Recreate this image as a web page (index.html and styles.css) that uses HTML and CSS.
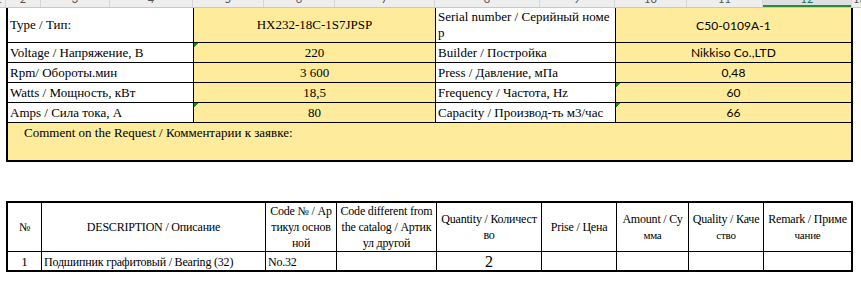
FILE: index.html
```html
<!DOCTYPE html>
<html lang="ru">
<head>
<meta charset="utf-8">
<title>Sheet</title>
<link rel="stylesheet" href="styles.css">
</head>
<body>
<div class="sheet">
  <div class="colhead">
    <div class="ch ch-first">1</div>
    <div class="ch">2</div>
    <div class="ch">3</div>
    <div class="ch">4</div>
    <div class="ch">5</div>
    <div class="ch">6</div>
    <div class="ch">7</div>
    <div class="ch">8</div>
    <div class="ch">9</div>
    <div class="ch">10</div>
    <div class="ch">11</div>
    <div class="ch ch-sel">12</div>
    <div class="ch ch-last">13</div>
  </div>

  <div class="spec">
    <div class="c lbl lbl-type">Type / Тип:</div>
    <div class="c val serif">HX232-18C-1S7JPSP</div>
    <div class="c lbl lbl-wrap">Serial number / Серийный номе<br>р</div>
    <div class="c val sans">C50-0109A-1</div>

    <div class="c lbl">Voltage / Напряжение, В</div>
    <div class="c val serif flag">220</div>
    <div class="c lbl">Builder / Постройка</div>
    <div class="c val sans">Nikkiso Co.,LTD</div>

    <div class="c lbl">Rpm/ Обороты.мин</div>
    <div class="c val serif">3 600</div>
    <div class="c lbl">Press / Давление, мПа</div>
    <div class="c val sans">0,48</div>

    <div class="c lbl">Watts / Мощность, кВт</div>
    <div class="c val serif">18,5</div>
    <div class="c lbl">Frequency / Частота, Hz</div>
    <div class="c val sans flag">60</div>

    <div class="c lbl">Amps / Сила тока, А</div>
    <div class="c val serif flag">80</div>
    <div class="c lbl">Capacity / Производ-ть м3/час</div>
    <div class="c val sans flag">66</div>

    <div class="c comment">Comment on the Request / Комментарии к заявке:</div>
  </div>

  <div class="items">
    <div class="h">№</div>
    <div class="h">DESCRIPTION / Описание</div>
    <div class="h"><span>Code № / Ар</span><span>тикул основ</span><span>ной</span></div>
    <div class="h"><span>Code different from</span><span>the catalog / Артик</span><span>ул другой</span></div>
    <div class="h"><span>Quantity / Количест</span><span>во</span></div>
    <div class="h">Prise / Цена</div>
    <div class="h"><span>Amount / Су</span><span class="small">мма</span></div>
    <div class="h"><span>Quality / Каче</span><span class="small">ство</span></div>
    <div class="h"><span>Remark / Приме</span><span class="small">чание</span></div>

    <div class="d d-center d-num flag">1</div>
    <div class="d">Подшипник графитовый / Bearing (32)</div>
    <div class="d">No.32</div>
    <div class="d"></div>
    <div class="d d-center d-big flag">2</div>
    <div class="d"></div>
    <div class="d"></div>
    <div class="d"></div>
    <div class="d"></div>
  </div>
</div>
</body>
</html>
```

FILE: styles.css
```css
html, body {
  margin: 0;
  padding: 0;
  background: #ffffff;
}

body {
  width: 861px;
  height: 281px;
  overflow: hidden;
  font-family: "Liberation Serif", "Times New Roman", serif;
  color: #000;
}

.sheet {
  margin-top: -10px;
}

/* column header strip */
.colhead {
  display: grid;
  grid-template-columns: 6px 35px 69px 83px 71px 71px 100px 105px 75px 72px 76px 89px 20px;
  height: 18px;
  background: #eeeeee;
  border-bottom: 1px solid #c8c8c8;
  box-sizing: border-box;
}

.ch {
  display: flex;
  align-items: center;
  justify-content: center;
  border-right: 1px solid #d6d6d6;
  font-family: "Lato", "Liberation Sans", sans-serif;
  font-size: 11px;
  color: #555;
  overflow: hidden;
  white-space: nowrap;
}

.ch-first {
  justify-content: flex-end;
  padding-right: 3px;
}

.ch-last {
  justify-content: flex-start;
  padding-left: 1px;
  border-right: none;
}

.ch-sel {
  background: #e0e0e0;
  color: #217346;
  box-shadow: inset 0 -2px 0 #2b8a3e;
}

/* top specification table */
.spec {
  margin-left: 6px;
  width: 847px;
  box-sizing: border-box;
  border: 2px solid #000;
  border-top: none;
  background: #000;
  display: grid;
  grid-template-columns: 185px 241px 179px 235px;
  grid-template-rows: 34px 19px 19px 19px 19px 37px;
  gap: 1px;
}

.c {
  display: flex;
  align-items: center;
  font-size: 13px;
  white-space: nowrap;
  overflow: hidden;
}

.lbl {
  background: #ffffff;
  padding-left: 2px;
}

.lbl-wrap {
  line-height: 16px;
  padding-top: 1px;
  display: block;
  align-self: stretch;
}

.val {
  background: #ffeb9c;
  justify-content: center;
}

.serif {
  font-family: "Liberation Serif", "Times New Roman", serif;
  font-size: 13px;
}

.sans {
  font-family: "Lato", "Liberation Sans", sans-serif;
  font-size: 12px;
  letter-spacing: 0.1px;
}

.comment {
  grid-column: 1 / -1;
  background: #ffeb9c;
  align-items: flex-start;
  padding-left: 16px;
  padding-top: 2px;
  line-height: 16px;
}

.flag {
  background-image: linear-gradient(135deg, #1e8a1e 0, #1e8a1e 3px, transparent 3px);
}

/* items table */
.items {
  margin-top: 39px;
  margin-left: 6px;
  width: 847px;
  box-sizing: border-box;
  border: 2px solid #000;
  background: #000;
  display: grid;
  grid-template-columns: 33px 223px 70px 99px 104px 74px 71px 74px 87px;
  grid-template-rows: 48px 18px;
  gap: 1px;
}

.h {
  background: #ffffff;
  display: flex;
  flex-direction: column;
  align-items: center;
  justify-content: center;
  text-align: center;
  font-size: 12px;
  line-height: 16px;
  white-space: nowrap;
  overflow: hidden;
  letter-spacing: -0.2px;
}

.h .small {
  font-size: 11px;
}

.d {
  background: #ffffff;
  display: flex;
  align-items: flex-end;
  font-size: 12px;
  line-height: 15px;
  letter-spacing: -0.2px;
  padding-left: 2px;
  white-space: nowrap;
  overflow: hidden;
}

.d-center {
  justify-content: center;
  padding-left: 0;
}

.d-num {
  font-size: 13px;
  line-height: 16px;
}

.d-big {
  font-size: 16px;
  line-height: 17px;
  letter-spacing: 0;
}
```
